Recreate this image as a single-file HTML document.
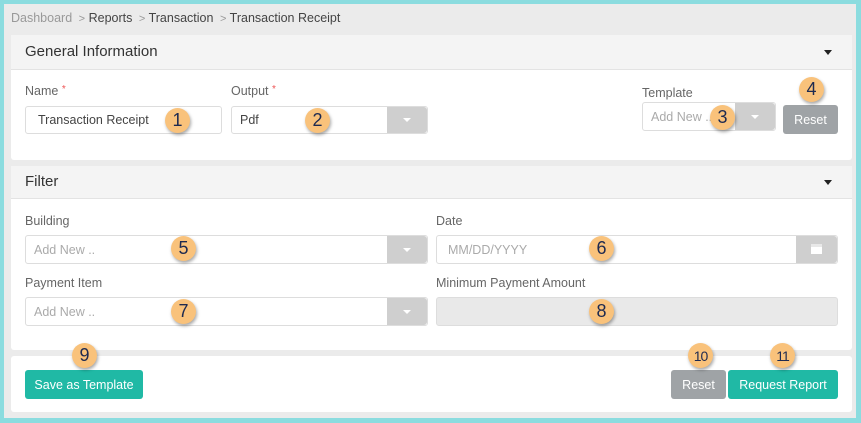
<!DOCTYPE html>
<html><head><style>
*{box-sizing:border-box;margin:0;padding:0}
body{width:861px;height:423px;background:#8bdcdf;font-family:"Liberation Sans",sans-serif;position:relative;overflow:hidden}
.bg{position:absolute;left:4px;top:4px;width:852px;height:414px;background:#ebebeb}
.a{position:absolute}
.panel{position:absolute;left:11px;width:841px;background:#fff;border-radius:3px}
.hd{position:absolute;left:0;top:0;width:100%;background:#f4f4f4;border-bottom:1px solid #e3e3e3;font-size:15px;color:#333;padding-left:14px}
.caret{position:absolute;right:20px;width:0;height:0;border-left:4px solid transparent;border-right:4px solid transparent;border-top:5px solid #222}
.lbl{position:absolute;font-size:12.5px;color:#666}
.req{color:#e55;font-size:10px;vertical-align:top}
.inp{position:absolute;border:1px solid #ddd;border-radius:3px;background:#fff;font-size:12.5px;color:#aaa;padding-left:8px;display:flex;align-items:center}
.sb{position:absolute;right:0;top:0;bottom:0;width:40px;background:#cfcfcf;border-radius:0 3px 3px 0}
.sb:after{content:"";position:absolute;left:50%;top:50%;margin:-2px 0 0 -4px;border-left:4px solid transparent;border-right:4px solid transparent;border-top:4px solid #fff}
.btn{position:absolute;border-radius:3px;color:#fff;font-size:12.5px;display:flex;align-items:center;justify-content:center}
.g{background:#9fa3a6}.t{background:#20b9a5}
.b{position:absolute;width:25px;height:25px;border-radius:50%;background:#f9c27b;box-shadow:1px 2px 3px rgba(0,0,0,.35);color:#1e2a50;font-size:18px;display:flex;align-items:center;justify-content:center;margin:-12px 0 0 -12px}
.b.s{font-size:14px;letter-spacing:-1px}
</style></head><body>
<div class="bg"></div>
<div class="a" style="left:11px;top:11px;font-size:12.5px;color:#999">Dashboard <span style="font-size:11px">&nbsp;&gt;</span> <span style="color:#444">Reports</span> <span style="font-size:11px">&nbsp;&gt;</span> <span style="color:#444">Transaction</span> <span style="font-size:11px">&nbsp;&gt;</span> <span style="color:#444">Transaction Receipt</span></div>

<div class="panel" style="top:35px;height:125px">
 <div class="hd" style="height:35px;line-height:34px">General Information<div class="caret" style="top:15px"></div></div>
</div>
<div class="lbl" style="left:25px;top:84px">Name <span class="req">*</span></div>
<div class="inp" style="left:25px;top:106px;width:197px;height:28px;color:#444;padding-left:12px">Transaction Receipt</div>
<div class="lbl" style="left:231px;top:84px">Output <span class="req">*</span></div>
<div class="inp" style="left:231px;top:106px;width:197px;height:28px;color:#444">Pdf<div class="sb"></div></div>
<div class="lbl" style="left:642px;top:86px">Template</div>
<div class="inp" style="left:642px;top:102px;width:134px;height:29px">Add New ..<div class="sb"></div></div>
<div class="btn g" style="left:783px;top:105px;width:55px;height:29px">Reset</div>

<div class="panel" style="top:166px;height:184px">
 <div class="hd" style="height:33px;line-height:32px">Filter<div class="caret" style="top:14px"></div></div>
</div>
<div class="lbl" style="left:25px;top:214px">Building</div>
<div class="inp" style="left:25px;top:235px;width:403px;height:29px">Add New ..<div class="sb"></div></div>
<div class="lbl" style="left:436px;top:214px">Date</div>
<div class="inp" style="left:436px;top:235px;width:402px;height:29px;padding-left:11px">MM/DD/YYYY<div class="sb" style="width:41px"></div></div>
<div class="a" style="left:811px;top:244px;width:11px;height:10px;background:#fff;border-top:3px solid #e8e8e8"></div>
<div class="lbl" style="left:25px;top:276px">Payment Item</div>
<div class="inp" style="left:25px;top:297px;width:403px;height:29px">Add New ..<div class="sb"></div></div>
<div class="lbl" style="left:436px;top:276px">Minimum Payment Amount</div>
<div class="inp" style="left:436px;top:297px;width:402px;height:29px;background:#e9e9e9"></div>

<div class="panel" style="top:356px;height:56px"></div>
<div class="btn t" style="left:25px;top:370px;width:118px;height:29px">Save as Template</div>
<div class="btn g" style="left:671px;top:370px;width:55px;height:29px">Reset</div>
<div class="btn t" style="left:728px;top:370px;width:110px;height:29px">Request Report</div>

<div class="b" style="left:177px;top:120px">1</div>
<div class="b" style="left:317px;top:120px">2</div>
<div class="b" style="left:722px;top:117px">3</div>
<div class="b" style="left:811px;top:89px">4</div>
<div class="b" style="left:183px;top:248px">5</div>
<div class="b" style="left:601px;top:248px">6</div>
<div class="b" style="left:183px;top:311px">7</div>
<div class="b" style="left:601px;top:311px">8</div>
<div class="b" style="left:84px;top:355px">9</div>
<div class="b s" style="left:700px;top:355px">10</div>
<div class="b s" style="left:782px;top:355px">11</div>
</body></html>
